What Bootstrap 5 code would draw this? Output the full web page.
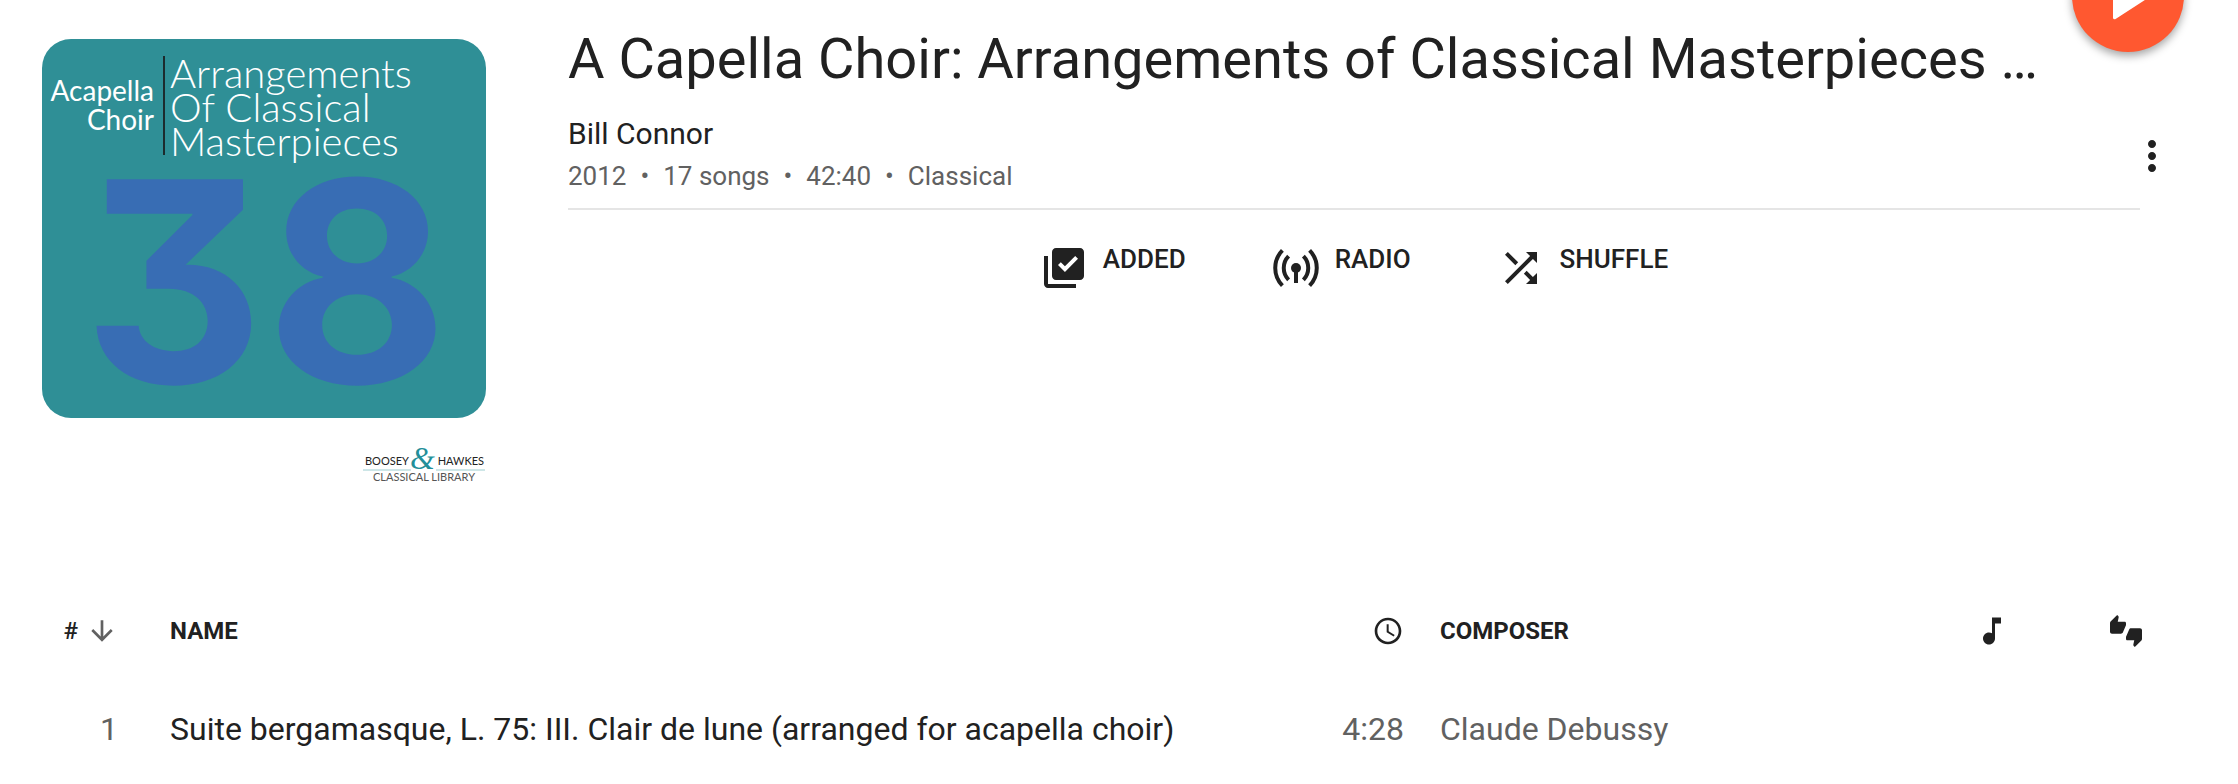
<!DOCTYPE html>
<html lang="en">
<head>
<meta charset="utf-8">
<meta name="viewport" content="width=device-width, initial-scale=1">
<title>A Capella Choir – Bill Connor</title>
<link href="https://cdn.jsdelivr.net/npm/bootstrap@5.3.0/dist/css/bootstrap.min.css" rel="stylesheet">
<style>
  body { font-family: Roboto, "Liberation Sans", sans-serif; color: #212121; background: #fff; overflow-x: hidden; }
  a { color: inherit; text-decoration: none; }
  svg { display: block; fill: currentColor; }
  .album { padding: 38px 98px 0 40px; gap: 80px; margin-bottom: 86px; }
  .cover { width: 448px; height: 448px; }
  .album-title { font-size: 56px; line-height: 64px; font-weight: 400; margin: -11px 100px 22px 0; }
  .artist { font-size: 30px; line-height: 42px; }
  .facts { font-size: 26px; line-height: 42px; color: #616161; gap: 14px; }
  .album-head { border-bottom: 2px solid #e5e5e5; padding-bottom: 11px; margin-bottom: 34px; }
  .more { right: -36px; top: 94px; }
  .fab { top: -60px; right: 54px; width: 112px; height: 112px; background: #ff5830; color: #fff;
         box-shadow: 0 4px 8px rgba(0,0,0,.35); }
  .fab svg { stroke: currentColor; stroke-width: 1; stroke-linejoin: round; }
  .actions { gap: 86px; }
  .actions button { gap: 15px; font-size: 26px; line-height: 30px; font-weight: 500; }
  .bare { background: none; border: 0; padding: 0; color: inherit; }
  .songs { table-layout: fixed; width: calc(100% - 86px); margin: 0 46px 0 40px; }
  .songs th { height: 118px; font-size: 24px; line-height: 28px; font-weight: 700; padding: 0; }
  .songs td { height: 78px; font-size: 32px; line-height: 40px; padding: 0; }
  .songs .dim { color: #616161; }
  .col-num { width: 130px; } .col-time { width: 100px; } .col-composer { width: 484px; }
  .col-plays { width: 136px; } .col-rating { width: 132px; }
  .songs .num { padding-right: 52px; text-align: right; font-weight: 500; }
  .songs td.num { font-weight: 400; }
  .songs .time { padding-right: 36px; text-align: right; }
  .art-light { font: 300 40px Lato, sans-serif; fill: #fff; }
  .art-regular { font: 400 28px Lato, sans-serif; fill: #fff; }
  .art-number { font: 700 280px Inter, sans-serif; font-feature-settings: "cv09"; fill: #386db4; }
  .art-house { font: 400 11px Lato, sans-serif; fill: #222; }
  .art-amp { font: italic 400 32px "Liberation Serif", serif; fill: #238f99; }
  .art-series { font: 400 11px Lato, sans-serif; fill: #555; }
</style>
</head>
<body>
<main class="position-relative">
  <header class="album d-flex align-items-start">
    <svg class="cover flex-shrink-0" viewBox="0 0 448 448" role="img" aria-label="Album cover">
      <rect x="2" y="1" width="444" height="379" rx="29" fill="#2f8f96"/>
      <text class="art-regular" x="114" y="63" text-anchor="end">Acapella</text>
      <text class="art-regular" x="114" y="92" text-anchor="end">Choir</text>
      <path d="M124 18v99" stroke="#1c2b2d" stroke-width="2"/>
      <text class="art-light" x="130" y="50">Arrangements</text>
      <text class="art-light" x="130" y="84">Of Classical</text>
      <text class="art-light" x="130" y="118">Masterpieces</text>
      <text class="art-number" x="43" y="345">3</text>
      <text class="art-number" x="226" y="345">8</text>
      <text class="art-house" x="325" y="427">BOOSEY</text>
      <text class="art-house" x="444" y="427" text-anchor="end">HAWKES</text>
      <path d="M323 432h48M396 432h49" stroke="#9ccdd0"/>
      <text class="art-amp" x="370" y="431">&amp;</text>
      <text class="art-series" x="384" y="443" text-anchor="middle">CLASSICAL LIBRARY</text>
    </svg>
    <div class="flex-grow-1 position-relative" style="min-width:0">
      <div class="album-head">
        <h1 class="album-title text-truncate">A Capella Choir: Arrangements of Classical Masterpieces …</h1>
        <div class="artist"><a href="#artist">Bill Connor</a></div>
        <div class="facts d-flex"><span>2012</span><span>•</span><span>17 songs</span><span>•</span><span>42:40</span><span>•</span><span>Classical</span></div>
      </div>
      <button class="bare more position-absolute" type="button" aria-label="More options">
        <svg width="48" height="48" viewBox="0 0 24 24"><path d="M12 8c1.100 0 2-.9 2-2s-.9-2-2-2-2 .9-2 2 .9 2 2 2zm0 2c-1.100 0-2 .9-2 2s.9 2 2 2 2-.9 2-2-.9-2-2-2zm0 6c-1.100 0-2 .9-2 2s.9 2 2 2 2-.9 2-2-.9-2-2-2z"/></svg>
      </button>
      <div class="actions d-flex justify-content-center">
        <button class="bare d-flex" type="button">
          <svg width="48" height="48" viewBox="0 0 24 24"><path d="M20 2H8c-1.100 0-2 .9-2 2v12c0 1.100.9 2 2 2h12c1.100 0 2-.9 2-2V4c0-1.100-.9-2-2-2zm-7.530 12L9 10.500l1.400-1.410 2.070 2.080L17.600 6 19 7.410 12.470 14zM4 6H2v14c0 1.100.9 2 2 2h14v-2H4V6z"/></svg>
          <span>ADDED</span>
        </button>
        <button class="bare d-flex" type="button">
          <svg width="48" height="48" viewBox="0 0 24 24"><g fill="none" stroke="currentColor" stroke-width="2"><path d="M5.200 3.200a12.600 12.600 0 0 0 0 17.600M18.800 3.200a12.600 12.600 0 0 1 0 17.600M8.300 6.100a8.400 8.400 0 0 0 0 11.800M15.700 6.100a8.400 8.400 0 0 1 0 11.800M12 11v8.500"/></g><circle cx="12" cy="12" r="2.500"/></svg>
          <span>RADIO</span>
        </button>
        <button class="bare d-flex" type="button">
          <svg width="48" height="48" viewBox="0 0 24 24"><path d="M10.590 9.170L5.410 4 4 5.410l5.170 5.170 1.420-1.410zM14.500 4l2.040 2.040L4 18.590 5.410 20 17.960 7.460 20 9.500V4h-5.500zm.33 9.410l-1.410 1.410 3.130 3.130L14.500 20H20v-5.500l-2.040 2.040-3.130-3.130z"/></svg>
          <span>SHUFFLE</span>
        </button>
      </div>
    </div>
  </header>
  <button class="fab btn rounded-circle position-absolute d-flex align-items-center justify-content-center p-0 border-0" type="button" aria-label="Play">
    <svg class="flex-shrink-0" width="80" height="80" viewBox="0 0 24 24"><path d="M8 5.500v13l10-6.500z"/></svg>
  </button>

  <table class="songs align-middle">
    <colgroup><col class="col-num"><col><col class="col-time"><col class="col-composer"><col class="col-plays"><col class="col-rating"></colgroup>
    <thead>
      <tr>
        <th class="num" scope="col"><div class="d-flex justify-content-end align-items-center gap-2"><span>#</span>
          <svg class="dim" width="32" height="32" viewBox="0 0 24 24" aria-label="Sorted ascending"><path d="M20 12l-1.410-1.410L13 16.170V4h-2v12.170l-5.580-5.590L4 12l8 8 8-8z"/></svg></div></th>
        <th scope="col">NAME</th>
        <th class="time" scope="col"><svg class="ms-auto" width="32" height="32" viewBox="0 0 24 24" aria-label="Duration"><path d="M11.990 2C6.470 2 2 6.480 2 12s4.470 10 9.990 10C17.520 22 22 17.520 22 12S17.520 2 11.990 2zM12 20c-4.420 0-8-3.580-8-8s3.580-8 8-8 8 3.580 8 8-3.580 8-8 8zm.5-13H11v6l5.250 3.150.75-1.230-4.500-2.670z"/></svg></th>
        <th scope="col">COMPOSER</th>
        <th scope="col"><svg class="mx-auto" width="36" height="36" viewBox="0 0 24 24" aria-label="Plays"><path d="M12 3v10.550c-.59-.34-1.270-.55-2-.55-2.210 0-4 1.790-4 4s1.790 4 4 4 4-1.790 4-4V7h4V3h-6z"/></svg></th>
        <th scope="col"><svg class="mx-auto" width="32" height="32" viewBox="0 0 24 24" aria-label="Rating"><path d="M12 6c0-.55-.45-1-1-1H5.820l.66-3.180.02-.23c0-.31-.13-.59-.33-.8L5.380 0 .44 4.940C.17 5.210 0 5.590 0 6v6.500c0 .83.67 1.500 1.500 1.500h6.750c.62 0 1.150-.38 1.380-.91l2.260-5.290c.07-.17.11-.36.11-.55V6zm10.500 4h-6.750c-.62 0-1.150.38-1.380.91l-2.260 5.290c-.07.17-.11.36-.11.55V18c0 .55.45 1 1 1h5.180l-.66 3.180-.02.24c0 .31.13.59.33.8l.79.78 4.940-4.940c.27-.27.44-.65.44-1.060v-6.500c0-.83-.67-1.500-1.500-1.500z"/></svg></th>
      </tr>
    </thead>
    <tbody>
      <tr>
        <td class="num dim">1</td>
        <td>Suite bergamasque, L. 75: III. Clair de lune (arranged for acapella choir)</td>
        <td class="time dim">4:28</td>
        <td class="dim"><a href="#composer">Claude Debussy</a></td>
        <td></td>
        <td></td>
      </tr>
    </tbody>
  </table>
</main>
<script src="https://cdn.jsdelivr.net/npm/bootstrap@5.3.0/dist/js/bootstrap.bundle.min.js"></script>
</body>
</html>
